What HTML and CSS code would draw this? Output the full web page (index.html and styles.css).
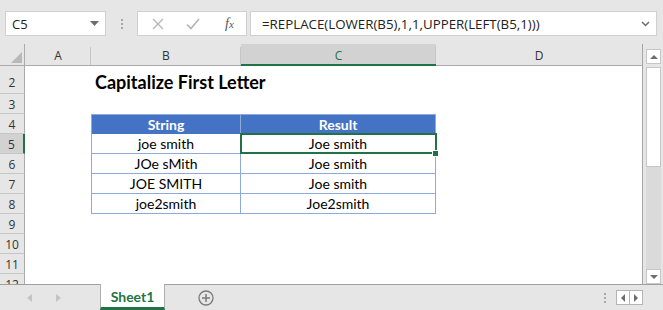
FILE: index.html
```html
<!DOCTYPE html>
<html>
<head>
<meta charset="utf-8">
<link rel="stylesheet" href="styles.css">
</head>
<body>
<div class="app">
  <div class="fbar">
    <div class="namebox">
      <span>C5</span>
      <svg width="9" height="5" viewBox="0 0 9 5"><polygon points="0,0 9,0 4.5,5" fill="#6d6d6d"/></svg>
    </div>
    <div class="grip"><i></i><i></i><i></i></div>
    <div class="fbtns">
      <svg width="12" height="12" viewBox="0 0 12 12"><path d="M1 1 L11 11 M11 1 L1 11" stroke="#b4b4b4" stroke-width="1.3" fill="none"/></svg>
      <svg width="14" height="12" viewBox="0 0 14 12"><path d="M1 6.5 L5 10.5 L13 1" stroke="#b4b4b4" stroke-width="1.6" fill="none"/></svg>
      <span class="fx">f<span class="fxx">x</span></span>
    </div>
    <div class="finput">
      <span class="ftext">=REPLACE(LOWER(B5),1,1,UPPER(LEFT(B5,1)))</span>
      <svg width="9" height="6" viewBox="0 0 9 6"><path d="M1 1 L4.5 4.5 L8 1" stroke="#6d6d6d" stroke-width="1.5" fill="none"/></svg>
    </div>
  </div>
  <div class="main">
    <div class="grid">
      <div class="row hdr">
        <div class="corner"><svg width="11" height="11" viewBox="0 0 11 11"><polygon points="11,0 11,11 0,11" fill="#b9b9b9"/></svg></div>
        <div class="ch">A</div>
        <div class="ch">B</div>
        <div class="ch sel">C</div>
        <div class="ch last">D</div>
      </div>
      <div class="row tall">
        <div class="rh">2</div><div></div>
        <div class="cell title">Capitalize First Letter</div><div></div><div></div>
      </div>
      <div class="row">
        <div class="rh">3</div><div></div><div></div><div></div><div></div>
      </div>
      <div class="row">
        <div class="rh">4</div><div></div>
        <div class="cell th first top">String</div>
        <div class="cell th top">Result</div><div></div>
      </div>
      <div class="row">
        <div class="rh sel">5</div><div></div>
        <div class="cell td first">joe smith</div>
        <div class="cell td active">Joe smith<span class="handle"></span></div><div></div>
      </div>
      <div class="row">
        <div class="rh">6</div><div></div>
        <div class="cell td first">JOe sMith</div>
        <div class="cell td">Joe smith</div><div></div>
      </div>
      <div class="row">
        <div class="rh">7</div><div></div>
        <div class="cell td first">JOE SMITH</div>
        <div class="cell td">Joe smith</div><div></div>
      </div>
      <div class="row">
        <div class="rh">8</div><div></div>
        <div class="cell td first">joe2smith</div>
        <div class="cell td">Joe2smith</div><div></div>
      </div>
      <div class="row">
        <div class="rh">9</div><div></div><div></div><div></div><div></div>
      </div>
      <div class="row">
        <div class="rh">10</div><div></div><div></div><div></div><div></div>
      </div>
      <div class="row">
        <div class="rh">11</div><div></div><div></div><div></div><div></div>
      </div>
      <div class="row">
        <div class="rh">12</div><div></div><div></div><div></div><div></div>
      </div>
    </div>
    <div class="vscroll">
      <div class="sbtn"><svg width="8" height="4" viewBox="0 0 8 4"><polygon points="0,4 8,4 4,0" fill="#6d6d6d"/></svg></div>
      <div class="thumb"></div>
      <div class="track"></div>
      <div class="sbtn"><svg width="8" height="4" viewBox="0 0 8 4"><polygon points="0,0 8,0 4,4" fill="#6d6d6d"/></svg></div>
    </div>
  </div>
  <div class="tabbar">
    <div class="nav">
      <svg width="5" height="8" viewBox="0 0 5 8"><polygon points="5,0 5,8 0,4" fill="#c4c4c4"/></svg>
      <svg width="5" height="8" viewBox="0 0 5 8"><polygon points="0,0 0,8 5,4" fill="#c4c4c4"/></svg>
    </div>
    <div class="tab">Sheet1</div>
    <div class="add">
      <svg width="16" height="16" viewBox="0 0 16 16"><circle cx="8" cy="8" r="7" stroke="#7a7a7a" stroke-width="1.3" fill="none"/><path d="M8 4 V12 M4 8 H12" stroke="#7a7a7a" stroke-width="1.5"/></svg>
    </div>
    <div class="spacer"></div>
    <div class="grip2"><i></i><i></i><i></i></div>
    <div class="hbtns">
      <div class="hb"><svg width="4" height="8" viewBox="0 0 4 8"><polygon points="4,0 4,8 0,4" fill="#6d6d6d"/></svg></div>
      <div class="hb"><svg width="4" height="8" viewBox="0 0 4 8"><polygon points="0,0 0,8 4,4" fill="#6d6d6d"/></svg></div>
    </div>
  </div>
</div>
</body>
</html>
```
FILE: styles.css
```css
* { box-sizing: border-box; }
html, body { margin: 0; padding: 0; }
body {
  width: 663px;
  height: 310px;
  overflow: hidden;
  background: #e6e6e6;
  font-family: "Open Sans", "Noto Sans", sans-serif;
}
.app { width: 663px; height: 310px; display: flex; flex-direction: column; }

/* formula bar */
.fbar {
  height: 44px;
  display: flex;
  align-items: flex-start;
  padding: 11px 6px 0 5px;
  flex: none;
}
.namebox {
  width: 101px;
  height: 25px;
  background: #fff;
  border: 1px solid #d0d0d0;
  display: flex;
  align-items: center;
  justify-content: space-between;
  padding: 0 6px 0 6px;
  font-size: 13px;
  color: #222;
}
.grip {
  width: 31px;
  height: 25px;
  display: flex;
  flex-direction: column;
  align-items: center;
  justify-content: center;
  gap: 2px;
}
.grip i, .grip2 i {
  display: block;
  width: 2px;
  height: 2px;
  background: #a8a8a8;
}
.fbtns {
  width: 110px;
  height: 25px;
  background: #fff;
  border: 1px solid #d0d0d0;
  display: flex;
  align-items: center;
  padding: 0 0 0 14px;
  gap: 22px;
}
.fx {
  font-family: "Liberation Serif", serif;
  font-style: italic;
  font-size: 14px;
  color: #555;
  margin-left: 3px;
}
.fxx { font-size: 11px; }
.finput {
  flex: 1;
  margin-left: 3px;
  height: 25px;
  background: #fff;
  border: 1px solid #d0d0d0;
  display: flex;
  align-items: center;
  justify-content: space-between;
  padding: 0 6px 0 11px;
}
.ftext { font-size: 13.3px; color: #222; }

/* main grid */
.main { display: flex; height: 240px; flex: none; }
.grid {
  width: 643px;
  height: 240px;
  overflow: hidden;
  background: #fff;
  border-right: 1px solid #a6a6a6;
}
.row {
  display: grid;
  grid-template-columns: 25px 66px 150px 195px 206px;
  height: 20px;
  font-family: Lato, "Open Sans", sans-serif;
  font-size: 14px;
  color: #000;
}
.row.tall { height: 28px; }
.row.hdr {
  height: 22px;
  background: #e6e6e6;
  border-bottom: 1px solid #ababab;
  font-family: "Open Sans", sans-serif;
  font-size: 12px;
  color: #333;
}
.corner {
  display: flex;
  align-items: flex-end;
  justify-content: flex-end;
  padding: 0 2px 2px 0;
  border-right: 1px solid #ababab;
}
.ch {
  display: flex;
  align-items: center;
  justify-content: center;
  position: relative;
  padding-top: 2px;
}
.ch::after {
  content: "";
  position: absolute;
  right: 0;
  top: 3px;
  bottom: 0;
  width: 1px;
  background: #c6c6c6;
}
.ch.last::after { display: none; }
.ch.sel {
  background: #d2d2d2;
  color: #217346;
  border-bottom: 2px solid #217346;
  margin-bottom: -1px;
}
.rh {
  background: #e6e6e6;
  border-right: 1px solid #ababab;
  border-bottom: 1px solid #c6c6c6;
  display: flex;
  align-items: center;
  justify-content: center;
  font-family: "Open Sans", sans-serif;
  font-size: 12px;
  color: #333;
  padding-top: 1px;
}
.tall .rh { padding-top: 5px; }
.rh.sel {
  background: #d2d2d2;
  border-right: 2px solid #217346;
}
.cell {
  display: flex;
  align-items: center;
  justify-content: center;
  white-space: nowrap;
  position: relative;
}
.title {
  justify-content: flex-start;
  padding: 4px 0 0 4px;
  font-weight: 700;
  font-size: 18px;
  overflow: visible;
}
.th {
  background: #4472c4;
  color: #fff;
  font-weight: 700;
  border-right: 1px solid #8eaadb;
}
.th.top { border-top: 1px solid #8eaadb; }
.td {
  border-right: 1px solid #8eaadb;
  border-bottom: 1px solid #8eaadb;
}
.first { border-left: 1px solid #8eaadb; }
.active::after {
  content: "";
  position: absolute;
  left: -1px;
  top: -1px;
  right: -2px;
  bottom: -1px;
  border: 2px solid #217346;
}
.handle {
  position: absolute;
  right: -4px;
  bottom: -4px;
  width: 7px;
  height: 7px;
  background: #217346;
  border: 1px solid #fff;
  z-index: 2;
}

/* vertical scrollbar */
.vscroll {
  width: 20px;
  display: flex;
  flex-direction: column;
  align-items: center;
  padding: 5px 2px 0 3px;
  background: #e6e6e6;
}
.sbtn {
  width: 15px;
  height: 15px;
  flex: none;
  background: #fff;
  border: 1px solid #c6c6c6;
  display: flex;
  align-items: center;
  justify-content: center;
}
.thumb {
  width: 15px;
  height: 100px;
  margin-top: 3px;
  background: #fff;
  border: 1px solid #c6c6c6;
  flex: none;
}
.track {
  width: 15px;
  flex: 1;
  background: #dadada;
}

/* tab bar */
.tabbar {
  height: 26px;
  flex: none;
  display: flex;
  border-top: 1px solid #a0a0a0;
  background: #e6e6e6;
}
.nav {
  width: 100px;
  display: flex;
  align-items: center;
  padding-left: 27px;
  gap: 24px;
}
.tab {
  width: 65px;
  background: #fff;
  border-left: 1px solid #b0b0b0;
  border-right: 1px solid #b0b0b0;
  border-bottom: 3px solid #217346;
  margin-top: -1px;
  display: flex;
  align-items: center;
  justify-content: center;
  font-family: Lato, "Open Sans", sans-serif;
  font-weight: 700;
  font-size: 14px;
  color: #217346;
  padding-top: 2px;
}
.add {
  width: 82px;
  display: flex;
  align-items: center;
  justify-content: center;
}
.spacer { flex: 1; }
.grip2 {
  width: 10px;
  display: flex;
  flex-direction: column;
  align-items: center;
  justify-content: center;
  gap: 2px;
  margin-right: 6px;
}
.hbtns {
  display: flex;
  align-items: center;
  margin-right: 20px;
}
.hb {
  width: 14px;
  height: 15px;
  background: #fff;
  border: 1px solid #b4b4b4;
  display: flex;
  align-items: center;
  justify-content: center;
}
.hb + .hb { margin-left: -1px; }
```
